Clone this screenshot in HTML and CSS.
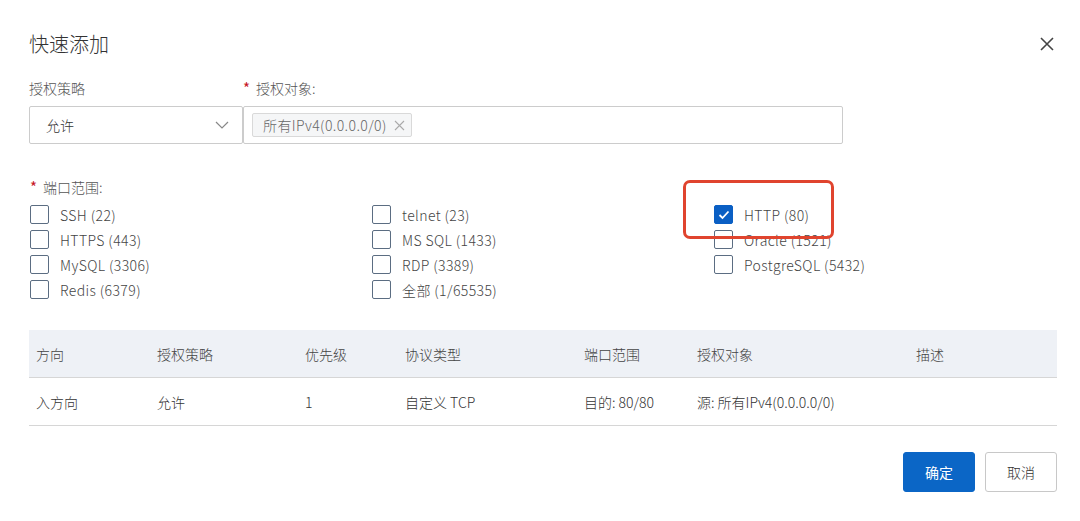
FILE: index.html
```html
<!DOCTYPE html>
<html lang="zh">
<head>
<meta charset="utf-8">
<link rel="stylesheet" href="styles.css">
</head>
<body>
<div class="dialog">
  <div class="header">
    <div class="title">快速添加</div>
    <svg class="close" width="16" height="16" viewBox="0 0 16 16"><path d="M2 2L14 14M14 2L2 14" stroke="#444" stroke-width="1.6" fill="none"/></svg>
  </div>

  <div class="form-row">
    <div class="field field-policy">
      <div class="label">授权策略</div>
      <div class="select">
        <span>允许</span>
        <svg width="14" height="8" viewBox="0 0 14 8"><path d="M1 1L7 7L13 1" stroke="#888" stroke-width="1.2" fill="none"/></svg>
      </div>
    </div>
    <div class="field field-target">
      <div class="label"><span class="req">*</span>授权对象:</div>
      <div class="input">
        <span class="tag">所有IPv4(0.0.0.0/0)<svg class="tag-x" width="11" height="11" viewBox="0 0 11 11"><path d="M1 1L10 10M10 1L1 10" stroke="#aaa" stroke-width="1.1" fill="none"/></svg></span>
      </div>
    </div>
  </div>

  <div class="label port-label"><span class="req">*</span>端口范围:</div>
  <div class="ports">
    <label class="cb"><span class="box"></span>SSH (22)</label>
    <label class="cb"><span class="box"></span>HTTPS (443)</label>
    <label class="cb"><span class="box"></span>MySQL (3306)</label>
    <label class="cb"><span class="box"></span>Redis (6379)</label>
    <label class="cb"><span class="box"></span>telnet (23)</label>
    <label class="cb"><span class="box"></span>MS SQL (1433)</label>
    <label class="cb"><span class="box"></span>RDP (3389)</label>
    <label class="cb"><span class="box"></span>全部 (1/65535)</label>
    <label class="cb"><span class="box checked"><svg width="12" height="10" viewBox="0 0 12 10"><path d="M1.5 5L4.5 8L10.5 1.5" stroke="#fff" stroke-width="1.8" fill="none"/></svg></span>HTTP (80)</label>
    <label class="cb"><span class="box"></span>Oracle (1521)</label>
    <label class="cb"><span class="box"></span>PostgreSQL (5432)</label>
    <div class="highlight"></div>
  </div>

  <div class="table">
    <div class="tr th">
      <div class="c1">方向</div><div class="c2">授权策略</div><div class="c3">优先级</div><div class="c4">协议类型</div><div class="c5">端口范围</div><div class="c6">授权对象</div><div class="c7">描述</div>
    </div>
    <div class="tr">
      <div class="c1">入方向</div><div class="c2">允许</div><div class="c3">1</div><div class="c4">自定义 TCP</div><div class="c5">目的: 80/80</div><div class="c6">源: 所有IPv4(0.0.0.0/0)</div><div class="c7"></div>
    </div>
  </div>

  <div class="footer">
    <button class="btn primary">确定</button>
    <button class="btn">取消</button>
  </div>
</div>
</body>
</html>
```

FILE: styles.css
```css
* { box-sizing: border-box; }
html, body { margin: 0; padding: 0; background: #fff; }
body {
  font-family: "Noto Sans CJK SC", "Noto Sans", sans-serif;
  font-weight: 300;
  font-size: 14px;
  color: #333;
}
.dialog { padding: 30px 23px 0 29px; }
.header {
  display: flex;
  justify-content: space-between;
  align-items: center;
  height: 28px;
}
.title { font-size: 20px; line-height: 28px; color: #333; }
.close { margin-right: 2px; }

.form-row { display: flex; margin-top: 20px; }
.label { font-size: 14px; line-height: 20px; color: #555; height: 20px; }
.req { color: #c6151f; margin-right: 6px; font-size: 15px; font-weight: 400; }
.field-policy { width: 214px; }
.field-target { width: 600px; }
.field-policy .label, .field-target .label { margin-bottom: 8px; }
.select {
  height: 38px;
  border: 1px solid #ccc;
  border-radius: 2px;
  display: flex;
  align-items: center;
  justify-content: space-between;
  padding: 0 13px 0 16px;
  color: #333;
}
.input {
  height: 38px;
  border: 1px solid #ccc;
  border-radius: 2px;
  padding: 6px 8px;
  display: flex;
  align-items: center;
}
.tag {
  display: inline-flex;
  align-items: center;
  height: 24px;
  padding: 0 6px 0 10px;
  background: #f5f6f7;
  border: 1px solid #d9d9d9;
  border-radius: 2px;
  color: #666;
  font-size: 14px;
  letter-spacing: 0.4px;
}
.tag-x { margin-left: 7px; }

.port-label { margin-top: 33px; padding-left: 1px; }
.ports {
  position: relative;
  display: grid;
  grid-template-rows: repeat(4, 25px);
  grid-auto-flow: column;
  grid-template-columns: 342px 342px 1fr;
  margin-top: 5px;
  padding-left: 1px;
}
.cb {
  display: flex;
  align-items: center;
  height: 25px;
  color: #444;
  font-size: 14px;
  letter-spacing: 0.4px;
}
.box {
  width: 19px;
  height: 19px;
  border: 1px solid #5b6d82;
  border-radius: 2px;
  margin-right: 11px;
  display: inline-flex;
  align-items: center;
  justify-content: center;
  background: #fff;
}
.box.checked { background: #0a5fc4; border-color: #0a5fc4; }
.highlight {
  position: absolute;
  left: 654px;
  top: -22px;
  width: 151px;
  height: 59px;
  border: 3px solid #e0442e;
  border-radius: 7px;
  pointer-events: none;
}

.table { margin-top: 28px; }
.tr {
  display: grid;
  grid-template-columns: 121px 148px 100px 179px 113px 219px 1fr;
  height: 48px;
  align-items: center;
  border-bottom: 1px solid #d6d6d6;
  color: #333;
}
.tr > div { padding-left: 7px; }
.th { background: #eef1f6; color: #444; }

.footer {
  display: flex;
  justify-content: flex-end;
  gap: 10px;
  margin-top: 26px;
}
.btn {
  width: 72px;
  height: 40px;
  border: 1px solid #c8c8c8;
  border-radius: 3px;
  background: #fff;
  color: #333;
  font-family: inherit;
  font-weight: 300;
  font-size: 14px;
}
.btn.primary { background: #0b66c6; border-color: #0b66c6; color: #fff; font-weight: 400; }
```
